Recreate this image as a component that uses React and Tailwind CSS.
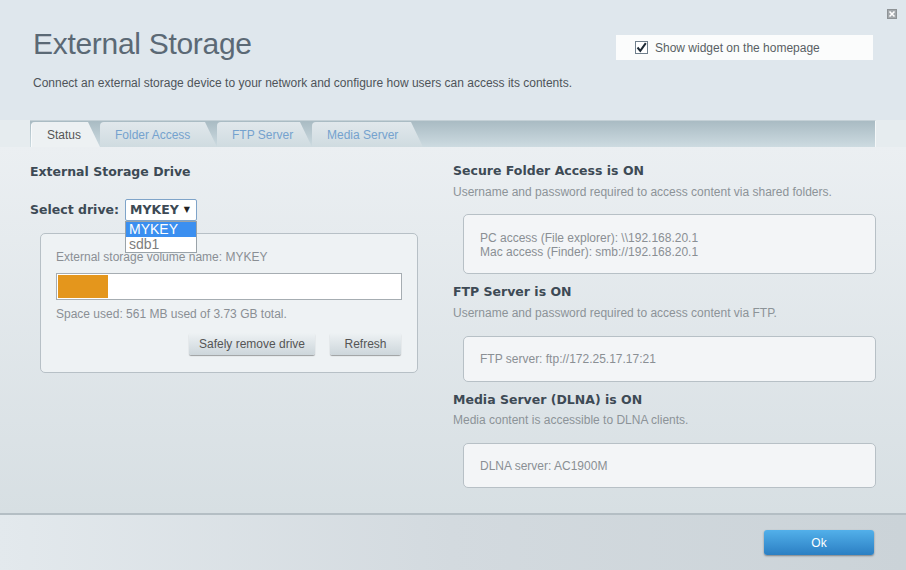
const tabs = [
  { label: 'Status', w: 'w-[69px]', active: true },
  { label: 'Folder Access', w: 'w-[117px]' },
  { label: 'FTP Server', w: 'w-[95px]' },
  { label: 'Media Server', w: 'w-[111px]' },
];

const Heading = ({ children, className = '' }) => (
  <h2 className={`font-['DejaVu_Sans',Verdana,sans-serif] font-bold text-[12.5px] leading-[16px] text-[#3d4a55] ${className}`}>
    {children}
  </h2>
);

const InfoBox = ({ lines, className = '' }) => (
  <div className={`ml-[10px] w-[413px] border border-[#b7c0c6] rounded-[5px] bg-[#f3f5f7] px-[16px] text-[12px] leading-[14px] text-[#8a8f94] ${className}`}>
    {lines.map((l) => (
      <div key={l}>{l}</div>
    ))}
  </div>
);

const Button = ({ children, className = '' }) => (
  <button className={`h-[22px] rounded-[2px] bg-gradient-to-b from-[#eef2f4] to-[#cdd6db] text-[12px] text-[#555] shadow-[0_1px_1px_rgba(0,0,0,0.35)] ${className}`}>
    {children}
  </button>
);

export default function App() {
  const usedPct = 14.5;

  return (
    <div className="w-[906px] h-[570px] flex flex-col overflow-hidden bg-[#e6ecef] font-['Liberation_Sans',Arial,sans-serif]">
      {/* header */}
      <header className="h-[120px] shrink-0 bg-[#dfe7ed] relative px-[33px]">
        <div className="absolute top-[9px] right-[9px] w-[10px] h-[10px] bg-[#a3a8ac] border border-[#8e9396] flex items-center justify-center">
          <svg width="8" height="8" viewBox="0 0 8 8">
            <path d="M1.5 1.5 L6.5 6.5 M6.5 1.5 L1.5 6.5" stroke="#fff" strokeWidth="1.6" />
          </svg>
        </div>
        <div className="flex justify-between items-start">
          <h1 className="mt-[27px] text-[30px] leading-[34px] text-[#5b6975] tracking-[-0.3px]">External Storage</h1>
          <label className="mt-[35px] w-[257px] h-[25px] bg-[#fbfcfc] flex items-center pl-[19px] gap-[7px] text-[12px] text-[#595f64]">
            <span className="w-[13px] h-[13px] border border-[#6f7f8c] bg-white flex items-center justify-center">
              <svg width="11" height="11" viewBox="0 0 11 11">
                <path d="M1.5 5.5 L4.3 8.8 L9.8 1.2" stroke="#1d2a36" strokeWidth="2" fill="none" />
              </svg>
            </span>
            Show widget on the homepage
          </label>
        </div>
        <p className="mt-[15px] text-[12px] leading-[14px] text-[#4e5459]">
          Connect an external storage device to your network and configure how users can access its contents.
        </p>
      </header>

      {/* tab bar */}
      <div className="h-[27px] shrink-0 ml-[30px] w-[846px] bg-gradient-to-b from-[#a9bbc3] to-[#cddbe1] border-t border-[#c4d0d6] border-r border-r-[#f4f7f8] flex items-end pl-[1px]">
        {tabs.map((t) => (
          <div
            key={t.label}
            className={`${t.w} h-[25px] rounded-tl-[4px] [clip-path:polygon(0_0,calc(100%-12px)_0,100%_100%,0_100%)] pl-[15px] flex items-center text-[12px] ${
              t.active
                ? 'bg-[#edf1f3] text-[#555] border-l border-[#f8fafb]'
                : 'bg-gradient-to-b from-[#e1e8ec] to-[#cfdbe0] text-[#75a2ce]'
            }`}
          >
            {t.label}
          </div>
        ))}
      </div>

      {/* content */}
      <main className="flex-1 flex px-[30px] bg-gradient-to-b from-[#ebeff2] to-[#d7dfe3]">
        <section className="w-[423px] shrink-0">
          <Heading className="mt-[17px]">External Storage Drive</Heading>
          <div className="mt-[19px] flex items-center gap-[6px]">
            <span className="font-['DejaVu_Sans',Verdana,sans-serif] font-bold text-[12.5px] text-[#3d4a55]">Select drive:</span>
            <div className="relative">
              <div className="w-[72px] h-[22px] border border-[#7fa4c9] rounded-[2px] bg-white flex items-center justify-between pl-[4px] pr-[6px] font-['DejaVu_Sans',Verdana,sans-serif] font-bold text-[12.5px] text-[#3d4a55]">
                MYKEY
                <span className="text-[8px] text-[#222]">▼</span>
              </div>
              <ul className="absolute left-0 top-[22px] w-[72px] border border-[#9aa3a9] bg-white z-10 text-[14px] leading-[15px]">
                <li className="bg-[#3b8ff0] text-white pl-[3px]">MYKEY</li>
                <li className="text-[#7d7d7d] pl-[3px]">sdb1</li>
              </ul>
            </div>
          </div>
          <div className="mt-[12px] ml-[10px] w-[378px] h-[140px] border border-[#b7c0c6] rounded-[5px] bg-[#eef2f4] px-[15px] pt-[16px]">
            <p className="text-[12px] leading-[14px] text-[#8a8f94]">External storage volume name: MYKEY</p>
            <div className="mt-[9px] h-[27px] border border-[#a6adb2] bg-white p-[1px]">
              <div className="h-full bg-[#e4961c]" style={{ width: `${usedPct}%` }} />
            </div>
            <p className="mt-[7px] text-[12px] leading-[14px] text-[#8a8f94]">Space used: 561 MB used of 3.73 GB total.</p>
            <div className="mt-[12px] flex justify-end gap-[15px] pr-[1px]">
              <Button className="w-[126px]">Safely remove drive</Button>
              <Button className="w-[71px]">Refresh</Button>
            </div>
          </div>
        </section>

        <section className="flex-1">
          <Heading className="mt-[16px]">Secure Folder Access is ON</Heading>
          <p className="mt-[6px] text-[12px] leading-[14px] text-[#8c9398]">
            Username and password required to access content via shared folders.
          </p>
          <InfoBox
            className="mt-[15px] h-[60px] pt-[16px]"
            lines={['PC access (File explorer): \\\\192.168.20.1', 'Mac access (Finder): smb://192.168.20.1']}
          />
          <Heading className="mt-[10px]">FTP Server is ON</Heading>
          <p className="mt-[6px] text-[12px] leading-[14px] text-[#8c9398]">
            Username and password required to access content via FTP.
          </p>
          <InfoBox className="mt-[16px] h-[46px] pt-[15px]" lines={['FTP server: ftp://172.25.17.17:21']} />
          <Heading className="mt-[10px]">Media Server (DLNA) is ON</Heading>
          <p className="mt-[5px] text-[12px] leading-[14px] text-[#8c9398]">Media content is accessible to DLNA clients.</p>
          <InfoBox className="mt-[16px] h-[45px] pt-[15px]" lines={['DLNA server: AC1900M']} />
        </section>
      </main>

      {/* footer */}
      <footer className="h-[57px] shrink-0 border-t-2 border-[#b4bec4] bg-gradient-to-r from-[#e3e9ed] via-[#d3dadf] to-[#cbd3d8] flex justify-end items-start pt-[15px] pr-[32px]">
        <button className="w-[110px] h-[25px] rounded-[3px] bg-gradient-to-b from-[#52b0ea] to-[#2b7fc3] text-white text-[12px] shadow-[0_1px_2px_rgba(0,0,0,0.4)]">
          Ok
        </button>
      </footer>
    </div>
  );
}
